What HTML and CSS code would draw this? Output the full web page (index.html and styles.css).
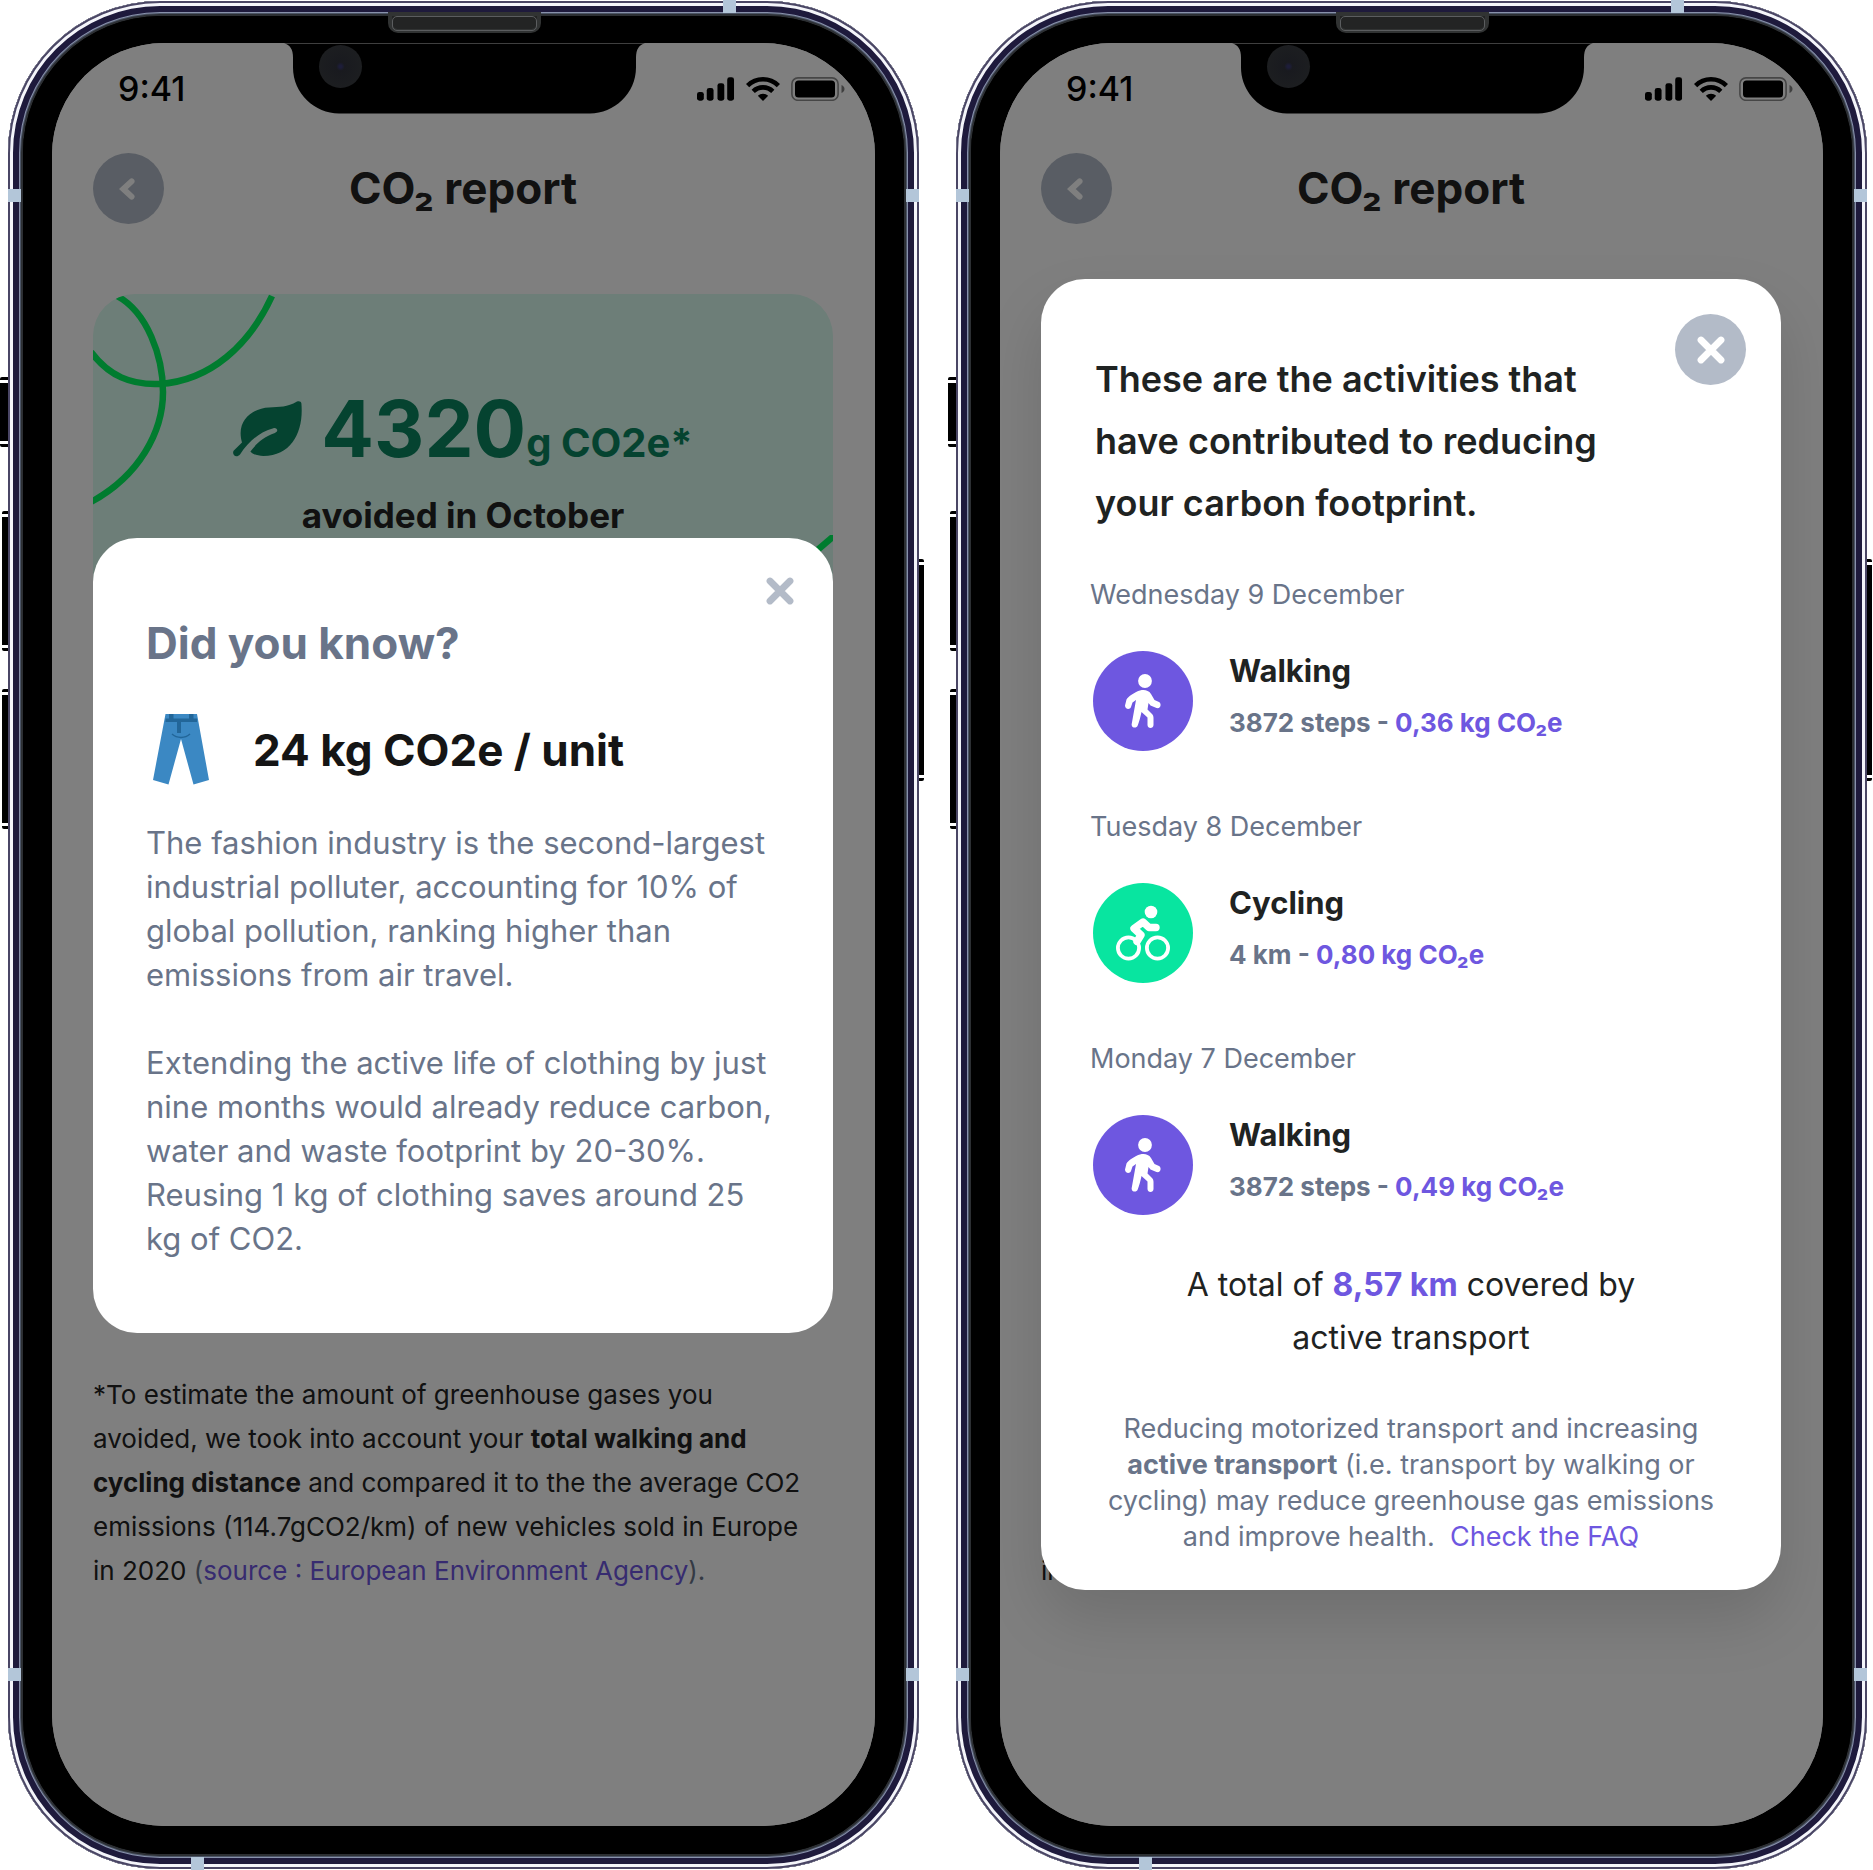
FILE: index.html
```html
<!DOCTYPE html>
<html lang="en">
<head>
<meta charset="utf-8">
<meta name="viewport" content="width=device-width, initial-scale=1">
<title>CO₂ report</title>
<link rel="stylesheet" href="styles.css">
</head>
<body>
<svg class="sprite" aria-hidden="true">
  <symbol id="signal" viewBox="0 0 39 24"><rect x="0" y="15" width="7" height="9" rx="2.5"/><rect x="10" y="11" width="7" height="13" rx="2.5"/><rect x="21" y="6" width="7" height="18" rx="2.5"/><rect x="31" y="0" width="7" height="24" rx="2.5"/></symbol>
  <symbol id="wifi" viewBox="0 0 34 24"><g fill="none" stroke="#000" stroke-width="4.6"><path d="M1.6 8.6a22 22 0 0 1 30.8 0"/><path d="M7.2 14.4a14 14 0 0 1 19.6 0"/></g><path d="M17 24l-5.2-5.2a7.4 7.4 0 0 1 10.4 0z"/></symbol>
  <symbol id="battery" viewBox="0 0 54 24"><rect x=".9" y=".9" width="46.2" height="22.4" rx="6" fill="none" stroke="#000" stroke-opacity=".45" stroke-width="1.6"/><rect x="4" y="3.600" width="40" height="17" rx="3.500"/><path d="M50.500 8v8c2-.8 3-2.300 3-4s-1-3.200-3-4z" fill-opacity=".5"/></symbol>
  <symbol id="chevron" viewBox="0 0 20 28"><path d="M14 5.500L4.800 14l9.200 8.500" fill="none" stroke="currentColor" stroke-width="6.500" stroke-linecap="round" stroke-linejoin="miter"/></symbol>
  <symbol id="cross" viewBox="0 0 28 28"><path d="M4 4l20 20M24 4L4 24" fill="none" stroke="currentColor" stroke-width="6.800" stroke-linecap="round"/></symbol>
  <symbol id="leaf" viewBox="0 0 70 56"><path d="M64 .6c1.800-1 4.200-.4 4.400 2 2.400 27-9 52.400-38 52.400-6 0-11-2-13-4.500 6-8 13-14.500 24.500-18.500 4-1.500 2.500-5.600-1.500-4.800C26 31 15.500 41 7 53.400c-3.500 4-8.500.6-6.400-3.600L9 41.500C2.500 19 20 7 36 6.400 47 6 54 6.500 64 .6z" fill="currentColor"/></symbol>
  <symbol id="walk" viewBox="0 0 36 54"><g fill="currentColor"><circle cx="20" cy="7" r="6.900"/><path d="M15 16.500c4-1 8.500-.5 11 3.500l3.500 6 4.500 2c3 2 1.500 7-2.500 6l-6-2.500-2-2.500-1 6.500 4 4c1.500 1.500 2 2.500 2 4.500v7c0 4-6 4-6 0v-7.500l-6-5.500c-1 5-2.500 10.500-3.800 13.500-1.200 3.500-6.700 2.300-6-1.500L11 26l-3.500 2.500L6 33c-1.500 3.500-6 2-6-1.500l1.500-6c1-2.500 9-8 13.500-9z"/></g></symbol>
  <symbol id="bike" viewBox="0 0 54 56"><g fill="none" stroke="currentColor" stroke-width="3.800"><circle cx="12.500" cy="43" r="10.600"/><circle cx="41.500" cy="43" r="10.600"/></g><circle cx="35" cy="7" r="6.300" fill="currentColor"/><path d="M40 22.500h-7L27 17 18 23.500l7 6.500-4 6.500" fill="none" stroke="currentColor" stroke-width="7.400" stroke-linecap="round" stroke-linejoin="round"/></symbol>
</svg>
<main class="stage">
  <section class="phone" aria-label="Did you know">
    <i class="key key-mute"></i><i class="key key-up"></i><i class="key key-down"></i><i class="key key-power"></i>
    <i class="band band-top"></i><i class="band band-bottom"></i><i class="band band-l1"></i><i class="band band-l2"></i><i class="band band-r1"></i><i class="band band-r2"></i>
    <div class="bezel">
      <i class="speaker"></i>
      <div class="screen">
        <div class="status"><span class="time">9:41</span><span class="indicators"><svg class="ic-signal"><use href="#signal"/></svg><svg class="ic-wifi"><use href="#wifi"/></svg><svg class="ic-battery"><use href="#battery"/></svg></span></div>
        <header class="top"><button class="round" type="button" aria-label="Back"><svg class="ic-chevron"><use href="#chevron"/></svg></button><h1>CO₂ report</h1></header>
        <section class="card">
          <svg class="deco deco-tl" viewBox="0 0 190 220"><g fill="none" stroke="#00f85e" stroke-width="6.500"><path d="M24 2C54 18 70 62 70 98c0 40-24 84-72 110"/><path d="M-2 58c18 24 40 33 68 32 52-3 91-40 113-88"/></g></svg>
          <svg class="deco deco-br" viewBox="0 0 60 60"><path d="M0 53L62 0" fill="none" stroke="#00f85e" stroke-width="6.500"/></svg>
          <p class="amount"><svg class="ic-leaf"><use href="#leaf"/></svg><strong>4320</strong><span>g CO2e*</span></p>
          <p class="when">avoided in October</p>
        </section>
        <p class="footnote">*To estimate the amount of greenhouse gases you avoided, we took into account your <b>total walking and cycling distance</b> and compared it to the the average CO2 emissions (114.7gCO2/km) of new vehicles sold in Europe in 2020 <span class="source">(<a href="#source">source : European Environment Agency</a>).</span></p>
        <div class="overlay">
          <div class="dialog tip" role="dialog" aria-labelledby="tip-title">
            <button class="bare" type="button" aria-label="Close"><svg class="ic-cross"><use href="#cross"/></svg></button>
            <h2 id="tip-title">Did you know?</h2>
            <p class="fact"><svg class="ic-jeans" viewBox="0 0 56 71"><path d="M12.500 0h31.500l12 66-15.500 4.500L28 25 15.500 70.500 0 66z" fill="#3b88c3"/><path d="M12.500 4.500h31.500V8H12.500zM16 0h4.500v5H16zM36 0h4.500v5H36zM24 7h4v12h-4z" fill="#226699"/><path d="M19 20c5 4.500 13 4.500 18 0" fill="none" stroke="#226699" stroke-width="1.500"/></svg>24 kg CO2e / unit</p>
            <p class="copy">The fashion industry is the second-largest industrial polluter, accounting for 10% of global pollution, ranking higher than emissions from air travel.</p>
            <p class="copy">Extending the active life of clothing by just nine months would already reduce carbon, water and waste footprint by 20-30%. Reusing 1 kg of clothing saves around 25 kg of CO2.</p>
          </div>
        </div>
      </div>
      <svg class="notch" viewBox="0 0 361 70"><path d="M0 0c6 1 9 6 9 14v10c0 26 22 46 46 46h251c24 0 46-20 46-46V14c0-8 3-13 9-14z"/></svg>
      <i class="camera"></i>
    </div>
  </section>

  <section class="phone" aria-label="Activities">
    <i class="key key-mute"></i><i class="key key-up"></i><i class="key key-down"></i><i class="key key-power"></i>
    <i class="band band-top"></i><i class="band band-bottom"></i><i class="band band-l1"></i><i class="band band-l2"></i><i class="band band-r1"></i><i class="band band-r2"></i>
    <div class="bezel">
      <i class="speaker"></i>
      <div class="screen">
        <div class="status"><span class="time">9:41</span><span class="indicators"><svg class="ic-signal"><use href="#signal"/></svg><svg class="ic-wifi"><use href="#wifi"/></svg><svg class="ic-battery"><use href="#battery"/></svg></span></div>
        <header class="top"><button class="round" type="button" aria-label="Back"><svg class="ic-chevron"><use href="#chevron"/></svg></button><h1>CO₂ report</h1></header>
        <section class="card"></section>
        <p class="footnote tail">in</p>
        <div class="overlay">
          <div class="dialog activities" role="dialog" aria-labelledby="act-title">
            <button class="round" type="button" aria-label="Close"><svg class="ic-cross"><use href="#cross"/></svg></button>
            <h2 id="act-title">These are the activities that have contributed to reducing your carbon footprint.</h2>
            <section class="day">
              <h3>Wednesday 9 December</h3>
              <div class="entry"><span class="badge violet"><svg class="ic-walk"><use href="#walk"/></svg></span><div><h4>Walking</h4><p>3872 steps - <em>0,36 kg CO₂e</em></p></div></div>
            </section>
            <section class="day">
              <h3>Tuesday 8 December</h3>
              <div class="entry"><span class="badge mint"><svg class="ic-bike"><use href="#bike"/></svg></span><div><h4>Cycling</h4><p>4 km - <em>0,80 kg CO₂e</em></p></div></div>
            </section>
            <section class="day">
              <h3>Monday 7 December</h3>
              <div class="entry"><span class="badge violet"><svg class="ic-walk"><use href="#walk"/></svg></span><div><h4>Walking</h4><p>3872 steps - <em>0,49 kg CO₂e</em></p></div></div>
            </section>
            <p class="total">A total of <em>8,57 km</em> covered by<br>active transport</p>
            <p class="note">Reducing motorized transport and increasing<br><b>active transport</b> (i.e. transport by walking or<br>cycling) may reduce greenhouse gas emissions<br>and improve health.&nbsp; <a href="#faq">Check the FAQ</a></p>
          </div>
        </div>
      </div>
      <svg class="notch" viewBox="0 0 361 70"><path d="M0 0c6 1 9 6 9 14v10c0 26 22 46 46 46h251c24 0 46-20 46-46V14c0-8 3-13 9-14z"/></svg>
      <i class="camera"></i>
    </div>
  </section>
</main>
</body>
</html>
```
FILE: styles.css
```css
* { box-sizing: border-box; margin: 0; }
:root { --ink: #151515; --slate: #697489; --violet: #6e57e0; --frame: #1e1a3c; }
body { background: #fff; font-family: Inter, "Liberation Sans", sans-serif; color: var(--ink); }
button { border: 0; padding: 0; background: none; font: inherit; cursor: pointer; }
a { text-decoration: none; }
svg { display: block; flex: none; }
em { font-style: normal; }
.sprite { position: absolute; width: 0; height: 0; }

.stage { display: grid; grid-template-columns: repeat(2, minmax(0, 1fr)); gap: 37px; min-height: 100vh; padding: 1px 6px 1px 8px; }

/* Phone body: nested rings of the metal frame */
.phone {
  position: relative; display: flex; padding: 15px; border-radius: 152px; background: #000;
  box-shadow: inset 0 0 0 2px #4a4665, inset 0 0 0 5px #f4f5fa, inset 0 0 0 11px var(--frame), inset 0 0 0 12px #8891ab, inset 0 0 0 13px #4c5566, inset 0 0 0 15px #2c2f33;
}
.bezel { position: relative; flex: 1; display: flex; padding: 27px 29px 28px; border-radius: 137px; background: #000; }
.screen { position: relative; flex: 1; min-width: 0; display: flex; flex-direction: column; padding: 0 42px 0 41px; border-radius: 112px; overflow: hidden; background: #fff; }

/* Side keys */
.key { position: absolute; left: -6px; width: 6px; background: linear-gradient(#fff, #fff) 0 3px / 100% 3px no-repeat, linear-gradient(#fff, #fff) 0 calc(100% - 3px) / 100% 3px no-repeat, #000; border-radius: 2px 0 0 2px; }
.key-mute { left: -8px; top: 376px; width: 8px; height: 70px; }
.key-up { top: 510px; height: 140px; }
.key-down { top: 688px; height: 140px; }
.key-power { left: auto; right: -5px; top: 558px; width: 5px; height: 222px; border-radius: 0 2px 2px 0; }
.band { position: absolute; width: 13px; height: 13px; background: #b3c6d9; }
.band-top { top: -1px; right: 183px; }
.band-bottom { bottom: -1px; left: 183px; }
.band-l1 { left: 0; top: 188px; }
.band-r1 { right: 0; top: 188px; }
.band-l2 { left: 0; bottom: 188px; }
.band-r2 { right: 0; bottom: 188px; }
.speaker { position: absolute; top: -4px; left: 50%; width: 153px; height: 21px; margin-left: -76px; background: #232424; border: 4px solid #313333; border-radius: 0 0 10px 10px; }
.speaker::before { content: ""; display: block; height: 100%; border: 1px solid #5b5d5f; border-radius: 5px; }
.notch { position: absolute; top: 27px; left: 50%; width: 361px; height: 71px; margin-left: -180px; }
.camera { position: absolute; top: 29px; left: 50%; width: 43px; height: 43px; margin-left: -145px; border-radius: 50%; background: radial-gradient(circle, #1d1d3a 0 4%, #191a1f 14%, #1e2021 100%); }

.status { display: flex; justify-content: space-between; align-items: center; padding: 26px 0 0 25px; height: 66px; margin-right: -12px; }
.time { font-size: 34px; line-height: 40px; font-weight: 500; color: #000; }
.indicators { display: flex; gap: 11px; }
.ic-signal { width: 38px; height: 24px; }
.ic-wifi { width: 34px; height: 24px; }
.ic-battery { width: 54px; height: 24px; }

.top { display: grid; grid-template-columns: 71px 1fr 71px; align-items: center; margin-top: 44px; }
.round { display: flex; align-items: center; justify-content: center; width: 71px; height: 71px; border-radius: 50%; background: #b3bbc8; color: #fff; }
.top .round { padding-right: 2px; }
.ic-chevron { width: 18px; height: 26px; }
h1 { padding-bottom: 2px; text-align: center; font-size: 44px; line-height: 54px; font-weight: 700; color: #222; }

.card { position: relative; overflow: hidden; height: 1030px; flex: none; margin-top: 70px; padding-top: 90px; border-radius: 42px; background: #dafcf0; text-align: center; }
.deco { position: absolute; }
.deco-tl { left: 0; top: 0; width: 190px; height: 220px; }
.deco-br { right: 0; top: 241px; width: 60px; height: 60px; }
.amount { display: flex; align-items: baseline; justify-content: center; color: #0a8660; }
.amount strong { margin-left: 18px; font-size: 78px; line-height: 90px; font-weight: 700; }
.amount span { font-size: 40px; line-height: 48px; font-weight: 700; }
.ic-leaf { width: 70px; height: 56px; }
.when { margin-top: 19px; font-size: 35px; line-height: 44px; font-weight: 700; color: #222; }

.footnote { margin-top: 49px; padding-right: 24px; font-size: 26px; line-height: 44px; color: #222; }
.tail { margin-top: 225px; }
.source { color: var(--slate); }
.source a { color: var(--violet); }

.overlay { position: absolute; inset: 0; padding: 0 42px 0 41px; background: rgba(0, 0, 0, .5); }
.dialog { position: relative; border-radius: 44px; background: #fff; }
.tip { margin-top: 495px; padding: 77px 53px 72px; }
.bare { position: absolute; top: 39px; right: 39px; color: #b3bbc8; }
.ic-cross { width: 28px; height: 28px; }
.tip h2, .fact { font-size: 44px; line-height: 56px; font-weight: 700; }
.tip h2 { color: var(--slate); }
.fact { display: flex; align-items: center; gap: 44px; margin-top: 43px; padding-left: 7px; }
.ic-jeans { width: 56px; height: 71px; }
.copy { margin-top: 36px; font-size: 31px; line-height: 44px; color: var(--slate); }
.copy + .copy { margin-top: 44px; }

.activities { margin-top: 236px; padding: 69px 49px 35px; color: #1f2322; box-shadow: 0 30px 60px rgba(0, 0, 0, .13); }
.activities .round { position: absolute; top: 35px; right: 35px; }
.activities h2 { max-width: 550px; padding-left: 5px; font-size: 36px; line-height: 62px; font-weight: 600; }
.day { margin-top: 43px; }
.day + .day { margin-top: 58px; }
.day h3 { font-size: 27px; line-height: 36px; font-weight: 400; color: var(--slate); }
.entry { display: flex; gap: 36px; margin-top: 38px; padding-left: 3px; }
.badge { display: flex; align-items: center; justify-content: center; width: 100px; height: 100px; border-radius: 50%; color: #fff; }
.violet { background: var(--violet); }
.mint { background: #08e5a0; }
.ic-walk { width: 36px; height: 54px; }
.ic-bike { width: 54px; height: 56px; }
.entry h4 { font-size: 31px; line-height: 40px; font-weight: 700; }
.entry p { margin-top: 16px; font-size: 26px; line-height: 32px; font-weight: 700; color: var(--slate); }
.entry em, .total em, .note a { color: var(--violet); }
.total { margin-top: 43px; text-align: center; font-size: 32px; line-height: 53px; }
.total em { font-weight: 700; }
.note { margin-top: 47px; text-align: center; font-size: 27px; line-height: 36px; color: var(--slate); }
.note b { font-weight: 700; }

@media (max-width: 1400px) {
  .stage { grid-template-columns: minmax(0, 911px); justify-content: center; }
}
```
